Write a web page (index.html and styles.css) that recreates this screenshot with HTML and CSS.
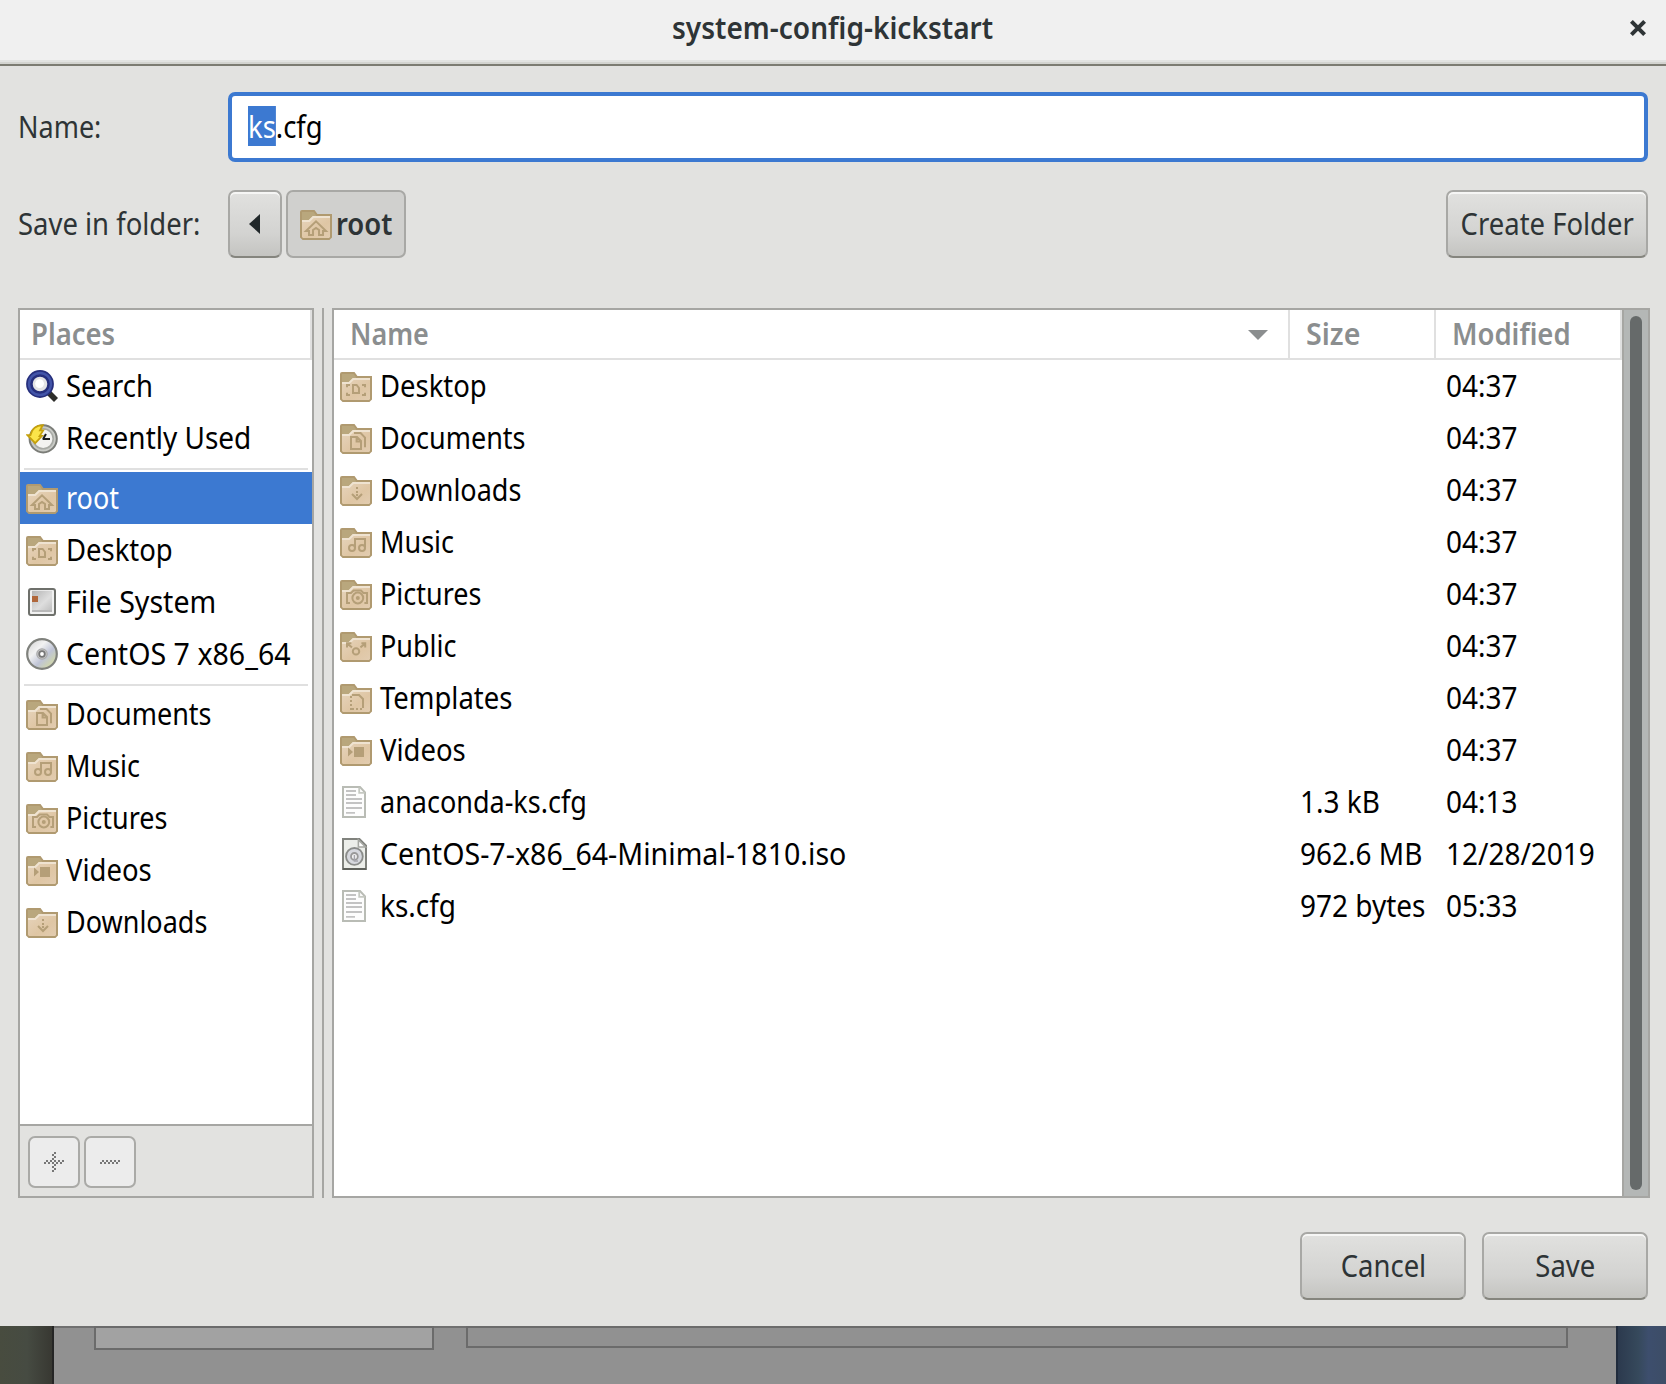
FILE: index.html
```html
<!DOCTYPE html>
<html lang="en">
<head>
<meta charset="utf-8">
<title>system-config-kickstart</title>
<link rel="stylesheet" href="styles.css">
</head>
<body>
<svg class="defs" width="0" height="0" aria-hidden="true">
  <defs>
    <linearGradient id="gFront" x1="0" y1="0" x2="1" y2="1"><stop offset="0" stop-color="#e6d4bc"/><stop offset=".6" stop-color="#dfc6a4"/><stop offset="1" stop-color="#e2ccb0"/></linearGradient>
    <linearGradient id="gDisk" x1="0" y1="0" x2="1" y2="1"><stop offset="0" stop-color="#b4b4b4"/><stop offset=".6" stop-color="#dedede"/><stop offset="1" stop-color="#c0c0c0"/></linearGradient>
    <linearGradient id="gCd" x1="0" y1="0" x2="1" y2="1"><stop offset="0" stop-color="#cfcfcf"/><stop offset=".35" stop-color="#f2f2f2"/><stop offset=".6" stop-color="#bfc4d6"/><stop offset=".8" stop-color="#ced4b2"/><stop offset="1" stop-color="#e4e4e4"/></linearGradient>
  </defs>
  <symbol id="folder" viewBox="0 0 16 16">
    <path d="M.5 14.5V2Q.5 1.5 1 1.5H7L8.5 3.5H15.5V14.5L14.5 15.5H1.5Z" fill="#b9a77d" stroke="#b09a70"/>
    <path d="M1 6H4.5L6.5 4H15V14.5L14.5 15H1.5L1 14.5Z" fill="url(#gFront)"/>
    <path d="M1 6.5H4.6L6.6 4.5H15" fill="none" stroke="#efe3d1"/>
  </symbol>
  <symbol id="home" viewBox="0 0 16 16"><use href="#folder"/><path d="M3 11.5H4.5V13.5H6.5V11L8 10L9.5 11V13.5H11.5V11.5H13L8 6.7Z" class="g"/></symbol>
  <symbol id="desktop" viewBox="0 0 16 16"><use href="#folder"/><path d="M3.5 8.6V7.5H5M11 7.5H12.5V8.6M3.5 11.4V12.5H5M11 12.5H12.5V11.4M6.5 7.5H8.3L9.5 9V11.5H6.5Z" class="g"/></symbol>
  <symbol id="docs" viewBox="0 0 16 16"><use href="#folder"/><path d="M5.5 7.5H8.5L10.5 9.5V13.5H5.5ZM8.3 7.5V9.7H10.5M7 5.5H10.3L12.5 7.8V12.6" class="g"/></symbol>
  <symbol id="down" viewBox="0 0 16 16"><use href="#folder"/><path d="M8.5 6.5V7.5M8.5 8.5V9.5M6 10L8.5 12.5L11 10M8.5 10V11" class="g"/></symbol>
  <symbol id="music" viewBox="0 0 16 16"><use href="#folder"/><path d="M7.5 11V6.5H12.5V10.8" class="g"/><circle cx="6" cy="11" r="1.5" class="g"/><circle cx="11" cy="11" r="1.5" class="g"/></symbol>
  <symbol id="pics" viewBox="0 0 16 16"><use href="#folder"/><path d="M5 12.5H3.5V7.5H5.5L6.8 6.3H10.5L11.7 7.5H13.5V12.5H12.2" class="g"/><circle cx="8.9" cy="10" r="2.7" class="g"/><circle cx="8.9" cy="10" r="1" class="gf"/></symbol>
  <symbol id="pub" viewBox="0 0 16 16"><use href="#folder"/><path d="M3.5 8.8V6.6H5.7M3.8 7L6 8.7M10.7 6.6H12.6V8.8M12.3 7L10.2 8.7" class="g"/><circle cx="8" cy="10.7" r="1.6" class="g"/></symbol>
  <symbol id="tmpl" viewBox="0 0 16 16"><use href="#folder"/><path d="M6 6.5H9.5L11.5 8.5V13" class="g"/><path d="M5.5 7V14M6 13.5H12" class="g" stroke-dasharray="1 1"/></symbol>
  <symbol id="video" viewBox="0 0 16 16"><use href="#folder"/><path d="M7 6.5H12V11.5H7ZM4 6.8L6.5 9L4 11.3Z" class="gf"/></symbol>
  <symbol id="search" viewBox="0 0 16 16">
    <path d="M11.5 11.5L15 15" stroke="#2d2d2a" stroke-width="2.8"/>
    <circle cx="7" cy="7" r="4" fill="#e4e4e4"/><circle cx="6.8" cy="6.8" r="2.2" fill="#fff"/>
    <circle cx="7" cy="7" r="5.3" fill="none" stroke="#262f7c" stroke-width="3.3"/>
    <circle cx="7" cy="7" r="5.5" fill="none" stroke="#4254a8" stroke-width="1.2"/>
  </symbol>
  <symbol id="recent" viewBox="0 0 16 16">
    <circle cx="8.6" cy="8.4" r="6.8" fill="#c9cbc6" stroke="#7b7d78"/>
    <circle cx="8.6" cy="8.4" r="5" fill="#f3f3f1" stroke="#a8aaa5" stroke-width=".8"/>
    <path d="M8.3 8.5H12M8.5 8.5L10 6" stroke="#1c1c1c" fill="none"/>
    <path d="M.7 6.6H2.2Q3.2 1.8 8.4 1.6L7 4.2H8.6L6.8 7H8L4.6 10.6Z" fill="#fbe54a" stroke="#c6a10c" stroke-width=".9"/>
  </symbol>
  <symbol id="disk" viewBox="0 0 16 16">
    <rect x="1.5" y="1.5" width="13" height="13" rx="1" fill="#f1f1f1" stroke="#6e706b"/>
    <rect x="3" y="2.4" width="10" height="9.6" fill="url(#gDisk)"/>
    <path d="M3 12.5H13" stroke="#aaa" stroke-width=".8"/>
    <path d="M2 14.5H14" stroke="#70726d"/>
    <rect x="3" y="5" width="3" height="3" fill="#b0673b"/>
  </symbol>
  <symbol id="cd" viewBox="0 0 16 16">
    <circle cx="8" cy="8" r="7.4" fill="url(#gCd)" stroke="#7f817c" stroke-width="1.1"/>
    <circle cx="8" cy="8" r="2.6" fill="#c8c8c8" stroke="#aaa" stroke-width=".6"/>
    <circle cx="8" cy="8" r="1.4" fill="#fff" stroke="#777" stroke-width=".9"/>
  </symbol>
  <symbol id="doc" viewBox="0 0 16 16">
    <path d="M1.5 .5H10L12.5 3.2V15.5H1.5Z" fill="#fdfdfd" stroke="#b9bcb5"/>
    <path d="M9.6 .8V3.4H12.4" fill="none" stroke="#c6c9c2" stroke-width=".9"/>
    <path d="M3 2.5H8M3 4.5H8M3 6.5H11M3 8.5H11M3 11H11M3 13.4H7.5" stroke="#c3c3c3" stroke-width=".9"/>
  </symbol>
  <symbol id="iso" viewBox="0 0 16 16">
    <path d="M1.5 .5H9.7L13 3.8V15.5H1.5Z" fill="#eceeea" stroke="#80827d"/>
    <path d="M9.2 1V4.5H12.8Z" fill="#fff" stroke="#a6a8a3" stroke-width=".8"/>
    <path d="M1.5 15.5H13" stroke="#60625d"/>
    <circle cx="7.2" cy="9.2" r="4.2" fill="#d6d8de" stroke="#8a8c8a" stroke-width=".9"/>
    <circle cx="7.2" cy="9.2" r="1.7" fill="#f2f2f2" stroke="#999" stroke-width=".9"/>
    <path d="M7.2 8.5V11.5H9" fill="none" stroke="#a5a5ad" stroke-width=".7"/>
  </symbol>
</svg>

<main class="dialog">
  <header class="titlebar">
    <span class="t title">system-config-kickstart</span>
    <svg class="close" viewBox="0 0 16 16"><path d="M1.4 1.4L14.6 14.6M14.6 1.4L1.4 14.6"/></svg>
  </header>

  <section class="form">
    <div class="row name-row">
      <label class="t label narrow">Name:</label>
      <div class="entry"><span class="t"><mark>ks</mark>.cfg</span></div>
    </div>
    <div class="row folder-row">
      <label class="t label">Save in folder:</label>
      <div class="path">
        <button class="btn back"><svg viewBox="0 0 12 20"><path d="M11 0V20L0 10Z"/></svg></button>
        <button class="btn crumb"><svg class="icon"><use href="#home"/></svg><span class="t">root</span></button>
      </div>
      <button class="btn create"><span class="t">Create Folder</span></button>
    </div>
  </section>

  <section class="panes">
    <aside class="places">
      <div class="head"><span class="t">Places</span></div>
      <ul class="list">
        <li><svg class="icon"><use href="#search"/></svg><span class="t">Search</span></li>
        <li><svg class="icon"><use href="#recent"/></svg><span class="t wide">Recently Used</span></li>
        <li class="sep"></li>
        <li class="selected"><svg class="icon"><use href="#home"/></svg><span class="t narrow">root</span></li>
        <li><svg class="icon"><use href="#desktop"/></svg><span class="t">Desktop</span></li>
        <li><svg class="icon"><use href="#disk"/></svg><span class="t wider">File System</span></li>
        <li><svg class="icon"><use href="#cd"/></svg><span class="t wider">CentOS 7 x86_64</span></li>
        <li class="sep"></li>
        <li><svg class="icon"><use href="#docs"/></svg><span class="t narrow">Documents</span></li>
        <li><svg class="icon"><use href="#music"/></svg><span class="t narrow">Music</span></li>
        <li><svg class="icon"><use href="#pics"/></svg><span class="t narrow">Pictures</span></li>
        <li><svg class="icon"><use href="#video"/></svg><span class="t">Videos</span></li>
        <li><svg class="icon"><use href="#down"/></svg><span class="t narrow">Downloads</span></li>
      </ul>
      <div class="tools">
        <button class="tool"><svg viewBox="0 0 10 10"><path d="M0 5.5H10M1 4.5H10M4.5 1V10M5.5 0V10" /></svg></button>
        <button class="tool"><svg viewBox="0 0 10 10"><path d="M0 5.5H10M1 4.5H10"/></svg></button>
      </div>
    </aside>
    <div class="handle"></div>
    <div class="files">
      <div class="table">
        <div class="frow head">
          <div class="cell"><span class="t narrow">Name</span><svg class="sort" viewBox="0 0 20 10"><path d="M0 0H20L10 10Z"/></svg></div>
          <div class="cell"><span class="t wider">Size</span></div>
          <div class="cell"><span class="t">Modified</span></div>
        </div>
        <div class="frow"><div><svg class="icon"><use href="#desktop"/></svg><span class="t">Desktop</span></div><div></div><div><span class="t wide">04:37</span></div></div>
        <div class="frow"><div><svg class="icon"><use href="#docs"/></svg><span class="t narrow">Documents</span></div><div></div><div><span class="t wide">04:37</span></div></div>
        <div class="frow"><div><svg class="icon"><use href="#down"/></svg><span class="t narrow">Downloads</span></div><div></div><div><span class="t wide">04:37</span></div></div>
        <div class="frow"><div><svg class="icon"><use href="#music"/></svg><span class="t narrow">Music</span></div><div></div><div><span class="t wide">04:37</span></div></div>
        <div class="frow"><div><svg class="icon"><use href="#pics"/></svg><span class="t narrow">Pictures</span></div><div></div><div><span class="t wide">04:37</span></div></div>
        <div class="frow"><div><svg class="icon"><use href="#pub"/></svg><span class="t narrow">Public</span></div><div></div><div><span class="t wide">04:37</span></div></div>
        <div class="frow"><div><svg class="icon"><use href="#tmpl"/></svg><span class="t">Templates</span></div><div></div><div><span class="t wide">04:37</span></div></div>
        <div class="frow"><div><svg class="icon"><use href="#video"/></svg><span class="t">Videos</span></div><div></div><div><span class="t wide">04:37</span></div></div>
        <div class="frow"><div><svg class="icon"><use href="#doc"/></svg><span class="t narrow">anaconda-ks.cfg</span></div><div><span class="t wide">1.3 kB</span></div><div><span class="t wide">04:13</span></div></div>
        <div class="frow"><div><svg class="icon"><use href="#iso"/></svg><span class="t wider">CentOS-7-x86_64-Minimal-1810.iso</span></div><div><span class="t wide">962.6 MB</span></div><div><span class="t wide">12/28/2019</span></div></div>
        <div class="frow"><div><svg class="icon"><use href="#doc"/></svg><span class="t wide">ks.cfg</span></div><div><span class="t wide">972 bytes</span></div><div><span class="t wide">05:33</span></div></div>
      </div>
      <div class="scrollbar"><div class="thumb"></div></div>
    </div>
  </section>

  <footer class="actions">
    <button class="btn"><span class="t">Cancel</span></button>
    <button class="btn"><span class="t">Save</span></button>
  </footer>
</main>

<div class="behind">
  <div class="desk-left"></div>
  <div class="window"><div class="box list-box"></div><div class="box main-box"></div></div>
  <div class="desk-right"></div>
</div>
</body>
</html>
```
FILE: styles.css
```css
* { box-sizing: border-box; }
body {
  margin: 0;
  width: 1666px;
  height: 1384px;
  overflow: hidden;
  background: #e2e2e0;
  color: #2e3436;
  font: 30.5px/40px "Noto Sans", "Open Sans", sans-serif;
}
.defs { position: absolute; }
.g { fill: none; stroke: #b59f78; stroke-width: 1; }
.gf { fill: #b59f78; }
.icon { width: 32px; height: 32px; flex: none; display: block; }
button { font: inherit; color: inherit; margin: 0; padding: 0; }

.t {
  --w: .9;
  display: inline-block;
  white-space: nowrap;
  transform: translateY(-1px) scaleX(var(--w));
  transform-origin: left center;
}
.narrow { --w: .885; }
.wide { --w: .917; }
.wider { --w: .937; }

.dialog { height: 1326px; display: flex; flex-direction: column; background: #e2e2e0; }

.titlebar {
  flex: none;
  height: 66px;
  padding: 0 20px 8px;
  display: grid;
  grid-template-columns: 1fr auto 1fr;
  align-items: center;
  background: linear-gradient(#f0f0f0 60px, #e2e3e1 60px 62px, #d3d4d0 62px);
  border-bottom: 2px solid #7c7c72;
}
.title { --w: .92; grid-column: 2; font-weight: 600; transform-origin: center; }
.close { justify-self: end; width: 16px; height: 16px; }
.close path { stroke: #2e3436; stroke-width: 4; fill: none; }

.form { flex: none; padding: 26px 18px 0; }
.row { display: flex; align-items: center; }
.name-row { height: 70px; }
.folder-row { height: 68px; margin-top: 28px; }
.label { width: 210px; }
.entry {
  flex: 1;
  height: 70px;
  padding-left: 16px;
  display: flex;
  align-items: center;
  background: #fff;
  border: 4px solid #3c79d1;
  border-radius: 7px;
  color: #000;
}
.entry mark { display: inline-block; background: #3c79d1; color: #fff; }
.path { display: flex; gap: 4px; }

.btn {
  height: 68px;
  display: flex;
  align-items: center;
  justify-content: center;
  border: 2px solid #a8a8a5;
  border-bottom-color: #85857e;
  border-radius: 7px;
  background: linear-gradient(#e1e1df, #d3d3d1 65%, #c4c4c1);
  box-shadow: inset 0 2px #f6f6f5;
}
.btn .t { transform-origin: center; }
.back { width: 54px; }
.back svg { width: 12px; height: 20px; fill: #21282a; }
.crumb {
  width: 120px;
  padding-left: 12px;
  gap: 4px;
  justify-content: flex-start;
  background: #d0d0ce;
  border-color: #a8a8a5;
  box-shadow: none;
  font-weight: 600;
}
.btn.crumb .t { transform-origin: left center; }
.create { width: 202px; margin-left: auto; }

.panes { flex: none; height: 890px; margin: 50px 16px 0 18px; display: flex; }
.places {
  width: 296px;
  border: 2px solid #a6a6a3;
  display: flex;
  flex-direction: column;
  background: #fff;
}
.head { height: 50px; border-bottom: 2px solid #e0e0e0; color: #8b8e8f; font-weight: 600; }
.places .head { padding-left: 11px; border-right: 2px solid #e0e0e0; display: flex; align-items: center; }
.list { flex: 1; margin: 0; padding: 0; list-style: none; color: #000; }
.list li { height: 52px; padding-left: 6px; display: flex; align-items: center; gap: 8px; }
.list .sep { height: 2px; margin: 4px 4px 2px; background: #e0e0e0; }
.list .selected { background: #3c79d1; color: #fff; }
.tools { height: 72px; padding: 10px 8px; display: flex; gap: 4px; background: #e2e2e0; border-top: 2px solid #a6a6a3; }
.tool {
  width: 52px;
  height: 52px;
  display: flex;
  align-items: center;
  justify-content: center;
  background: #ececec;
  border: 2px solid #aaaaa7;
  border-radius: 7px;
}
.tool svg { width: 20px; height: 20px; shape-rendering: crispEdges; }
.tool path { stroke: #777; stroke-dasharray: 1 1; fill: none; }

.handle { width: 2px; margin: 0 8px; background: #a6a6a3; }

.files { flex: 1; display: flex; border: 2px solid #a6a6a3; background: #fff; color: #000; }
.table { flex: 1; }
.frow { height: 52px; display: grid; grid-template-columns: 956px 146px 1fr; }
.frow > div { display: flex; align-items: center; gap: 8px; padding-left: 10px; }
.frow > div:first-child { padding-left: 6px; }
.frow.head { height: 50px; }
.frow.head > .cell { padding-left: 16px; border-right: 2px solid #e0e0e0; }
.sort { width: 20px; height: 10px; margin: 2px 20px 0 auto; fill: #8b8e8f; }
.scrollbar { width: 26px; padding: 6px; border-left: 2px solid #a6a6a3; background: #b4b7b6; }
.thumb { width: 12px; height: 874px; border-radius: 6px; background: #666a6a; }

.actions { display: flex; justify-content: flex-end; gap: 16px; padding: 34px 18px 0; }
.actions .btn { width: 166px; }

.behind { height: 58px; display: flex; background: linear-gradient(#6b6b6b, #6b6b6b); }
.desk-left { width: 54px; background: linear-gradient(90deg, #484c3f, #464b42 50%, #383832 96%, #252525 96%); }
.window { width: 1562px; padding-left: 40px; display: flex; gap: 32px; background: #919191; box-shadow: inset 0 2px #707070; }
.box { border: 2px solid #6b6b6b; }
.list-box { width: 340px; height: 24px; background: #a2a2a2; }
.main-box { width: 1102px; height: 22px; }
.desk-right { flex: 1; background: linear-gradient(90deg, #202b3c 4%, #2c3a4e 4%, #36495c 45%, #3d4e6d 65%, #3d4d66); }
```
